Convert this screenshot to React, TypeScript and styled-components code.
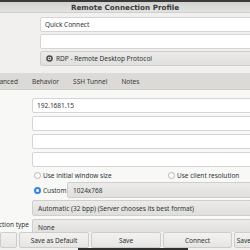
import styled, { createGlobalStyle } from "styled-components";

const GlobalStyle = createGlobalStyle`
  html, body {
    margin: 0;
    padding: 0;
    width: 250px;
    height: 250px;
    overflow: hidden;
    background: #f1f0ef;
    font-family: "Noto Sans", "DejaVu Sans", sans-serif;
    font-size: 6.5px;
    color: #2e3436;
  }
`;

const Window = styled.div`
  width: 250px;
  height: 250px;
  display: flex;
  flex-direction: column;
  overflow: hidden;
  position: relative;
`;

const TopStrip = styled.div`
  height: 2px;
  background: #3a3a3a;
  flex-shrink: 0;
`;

const TitleBar = styled.div`
  height: 11px;
  flex-shrink: 0;
  box-sizing: border-box;
  background: linear-gradient(#d2d2d2, #e2e2e1);
  border-bottom: 1px solid #cfcfcd;
  display: flex;
  align-items: center;
  justify-content: center;
  font-family: "DejaVu Sans", sans-serif;
  font-size: 7.2px;
  font-weight: bold;
  color: #3c3c3c;
`;

const Header = styled.div`
  display: flex;
  flex-direction: column;
  gap: 2px;
  padding: 4px 0 7px 40px;
  flex-shrink: 0;
`;

const Entry = styled.div`
  height: 15px;
  width: 260px;
  box-sizing: border-box;
  background: #ffffff;
  border: 1px solid #d6d5d3;
  border-radius: 2px;
  display: flex;
  align-items: center;
  padding-left: 4px;
  flex-shrink: 0;
`;

const Combo = styled.div<{ $w?: number; $h?: number }>`
  height: ${({ $h }) => $h ?? 16}px;
  width: ${({ $w }) => $w ?? 260}px;
  box-sizing: border-box;
  background: linear-gradient(#ecebea, #e0dfdd);
  border: 1px solid #cfcecc;
  border-radius: 2px;
  display: flex;
  align-items: center;
  gap: 3px;
  padding-left: 5px;
  flex-shrink: 0;
  white-space: nowrap;
`;

const Tabs = styled.div`
  height: 17px;
  flex-shrink: 0;
  box-sizing: border-box;
  background: #dcdad7;
  border-bottom: 1px solid #cfcdca;
  display: flex;
  align-items: center;
  gap: 14px;
  margin-left: -12px;
  color: #3a3a3a;
`;

const Tab = styled.span`
  white-space: nowrap;
`;

const Content = styled.div`
  height: 142px;
  flex-shrink: 0;
  overflow: hidden;
  background: #f8f8f7;
  display: flex;
  flex-direction: column;
  padding: 8px 0 0 32px;
  box-sizing: border-box;
`;

const Fields = styled.div`
  display: flex;
  flex-direction: column;
  gap: 3px;
`;

const Row = styled.div<{ $mt: number; $ml?: number; $top?: boolean }>`
  display: flex;
  align-items: ${({ $top }) => ($top ? "flex-start" : "center")};
  gap: 2px;
  white-space: nowrap;
  flex-shrink: 0;
  margin-top: ${({ $mt }) => $mt}px;
  margin-left: ${({ $ml }) => $ml ?? 0}px;
`;

const Radio = styled.span<{ $on?: boolean }>`
  width: 7px;
  height: 7px;
  box-sizing: border-box;
  border-radius: 50%;
  border: ${({ $on }) => ($on ? "2px solid #3584e4" : "1px solid #b6b5b3")};
  background: #ffffff;
  flex-shrink: 0;
`;

const RadioLabel = styled.span<{ $w?: number }>`
  width: ${({ $w }) => ($w ? `${$w}px` : "auto")};
  flex-shrink: 0;
`;

const Label = styled.span`
  width: 29px;
  flex-shrink: 0;
  text-align: right;
  white-space: nowrap;
  overflow: hidden;
  direction: rtl;
  margin: 1px 1px 0 0;
`;

const ButtonBar = styled.div`
  height: 16px;
  display: flex;
  gap: 2px;
  flex-shrink: 0;
`;

const Button = styled.div<{ $w: number }>`
  width: ${({ $w }) => $w}px;
  flex-shrink: 0;
  box-sizing: border-box;
  border: 1px solid #cdccca;
  border-radius: 2px;
  background: linear-gradient(#f3f2f1, #e6e5e3);
  display: flex;
  align-items: center;
  justify-content: center;
  white-space: nowrap;
  overflow: hidden;
`;

const BottomStrip = styled.div`
  position: absolute;
  left: 78px;
  bottom: 0;
  width: 110px;
  height: 2px;
  background: #2f2f2f;
`;

const PluginIcon = () => (
  <svg width="7" height="7" viewBox="0 0 14 14">
    <circle cx="7" cy="7" r="6.5" fill="#4a4a4a" />
    <circle cx="7" cy="7" r="3.6" fill="#d8d8d8" />
    <circle cx="7" cy="7" r="1.6" fill="#4a4a4a" />
  </svg>
);

export default function App() {
  return (
    <Window>
      <GlobalStyle />
      <TopStrip />
      <TitleBar>Remote Connection Profile</TitleBar>
      <Header>
        <Entry>Quick Connect</Entry>
        <Entry />
        <Combo $h={15}>
          <PluginIcon />
          RDP - Remote Desktop Protocol
        </Combo>
      </Header>
      <Tabs>
        <Tab>Advanced</Tab>
        <Tab>Behavior</Tab>
        <Tab>SSH Tunnel</Tab>
        <Tab>Notes</Tab>
      </Tabs>
      <Content>
        <Fields>
          <Entry>192.1681.15</Entry>
          <Entry />
          <Entry />
          <Entry />
        </Fields>
        <Row $mt={4} $ml={2}>
          <Radio />
          <RadioLabel $w={123}>Use initial window size</RadioLabel>
          <Radio />
          <RadioLabel>Use client resolution</RadioLabel>
        </Row>
        <Row $mt={2} $ml={2}>
          <Radio $on />
          <RadioLabel $w={22}>Custom</RadioLabel>
          <Combo $w={200}>1024x768</Combo>
        </Row>
        <Row $mt={2}>
          <Combo>Automatic (32 bpp) (Server chooses its best format)</Combo>
        </Row>
        <Row $mt={3} $ml={-32} $top>
          <Label>Connection type</Label>
          <Combo>None</Combo>
        </Row>
      </Content>
      <ButtonBar>
        <Button $w={17} />
        <Button $w={70}>Save as Default</Button>
        <Button $w={70}>Save</Button>
        <Button $w={69}>Connect</Button>
        <Button $w={60}>Save and Connect</Button>
      </ButtonBar>
      <BottomStrip />
    </Window>
  );
}
